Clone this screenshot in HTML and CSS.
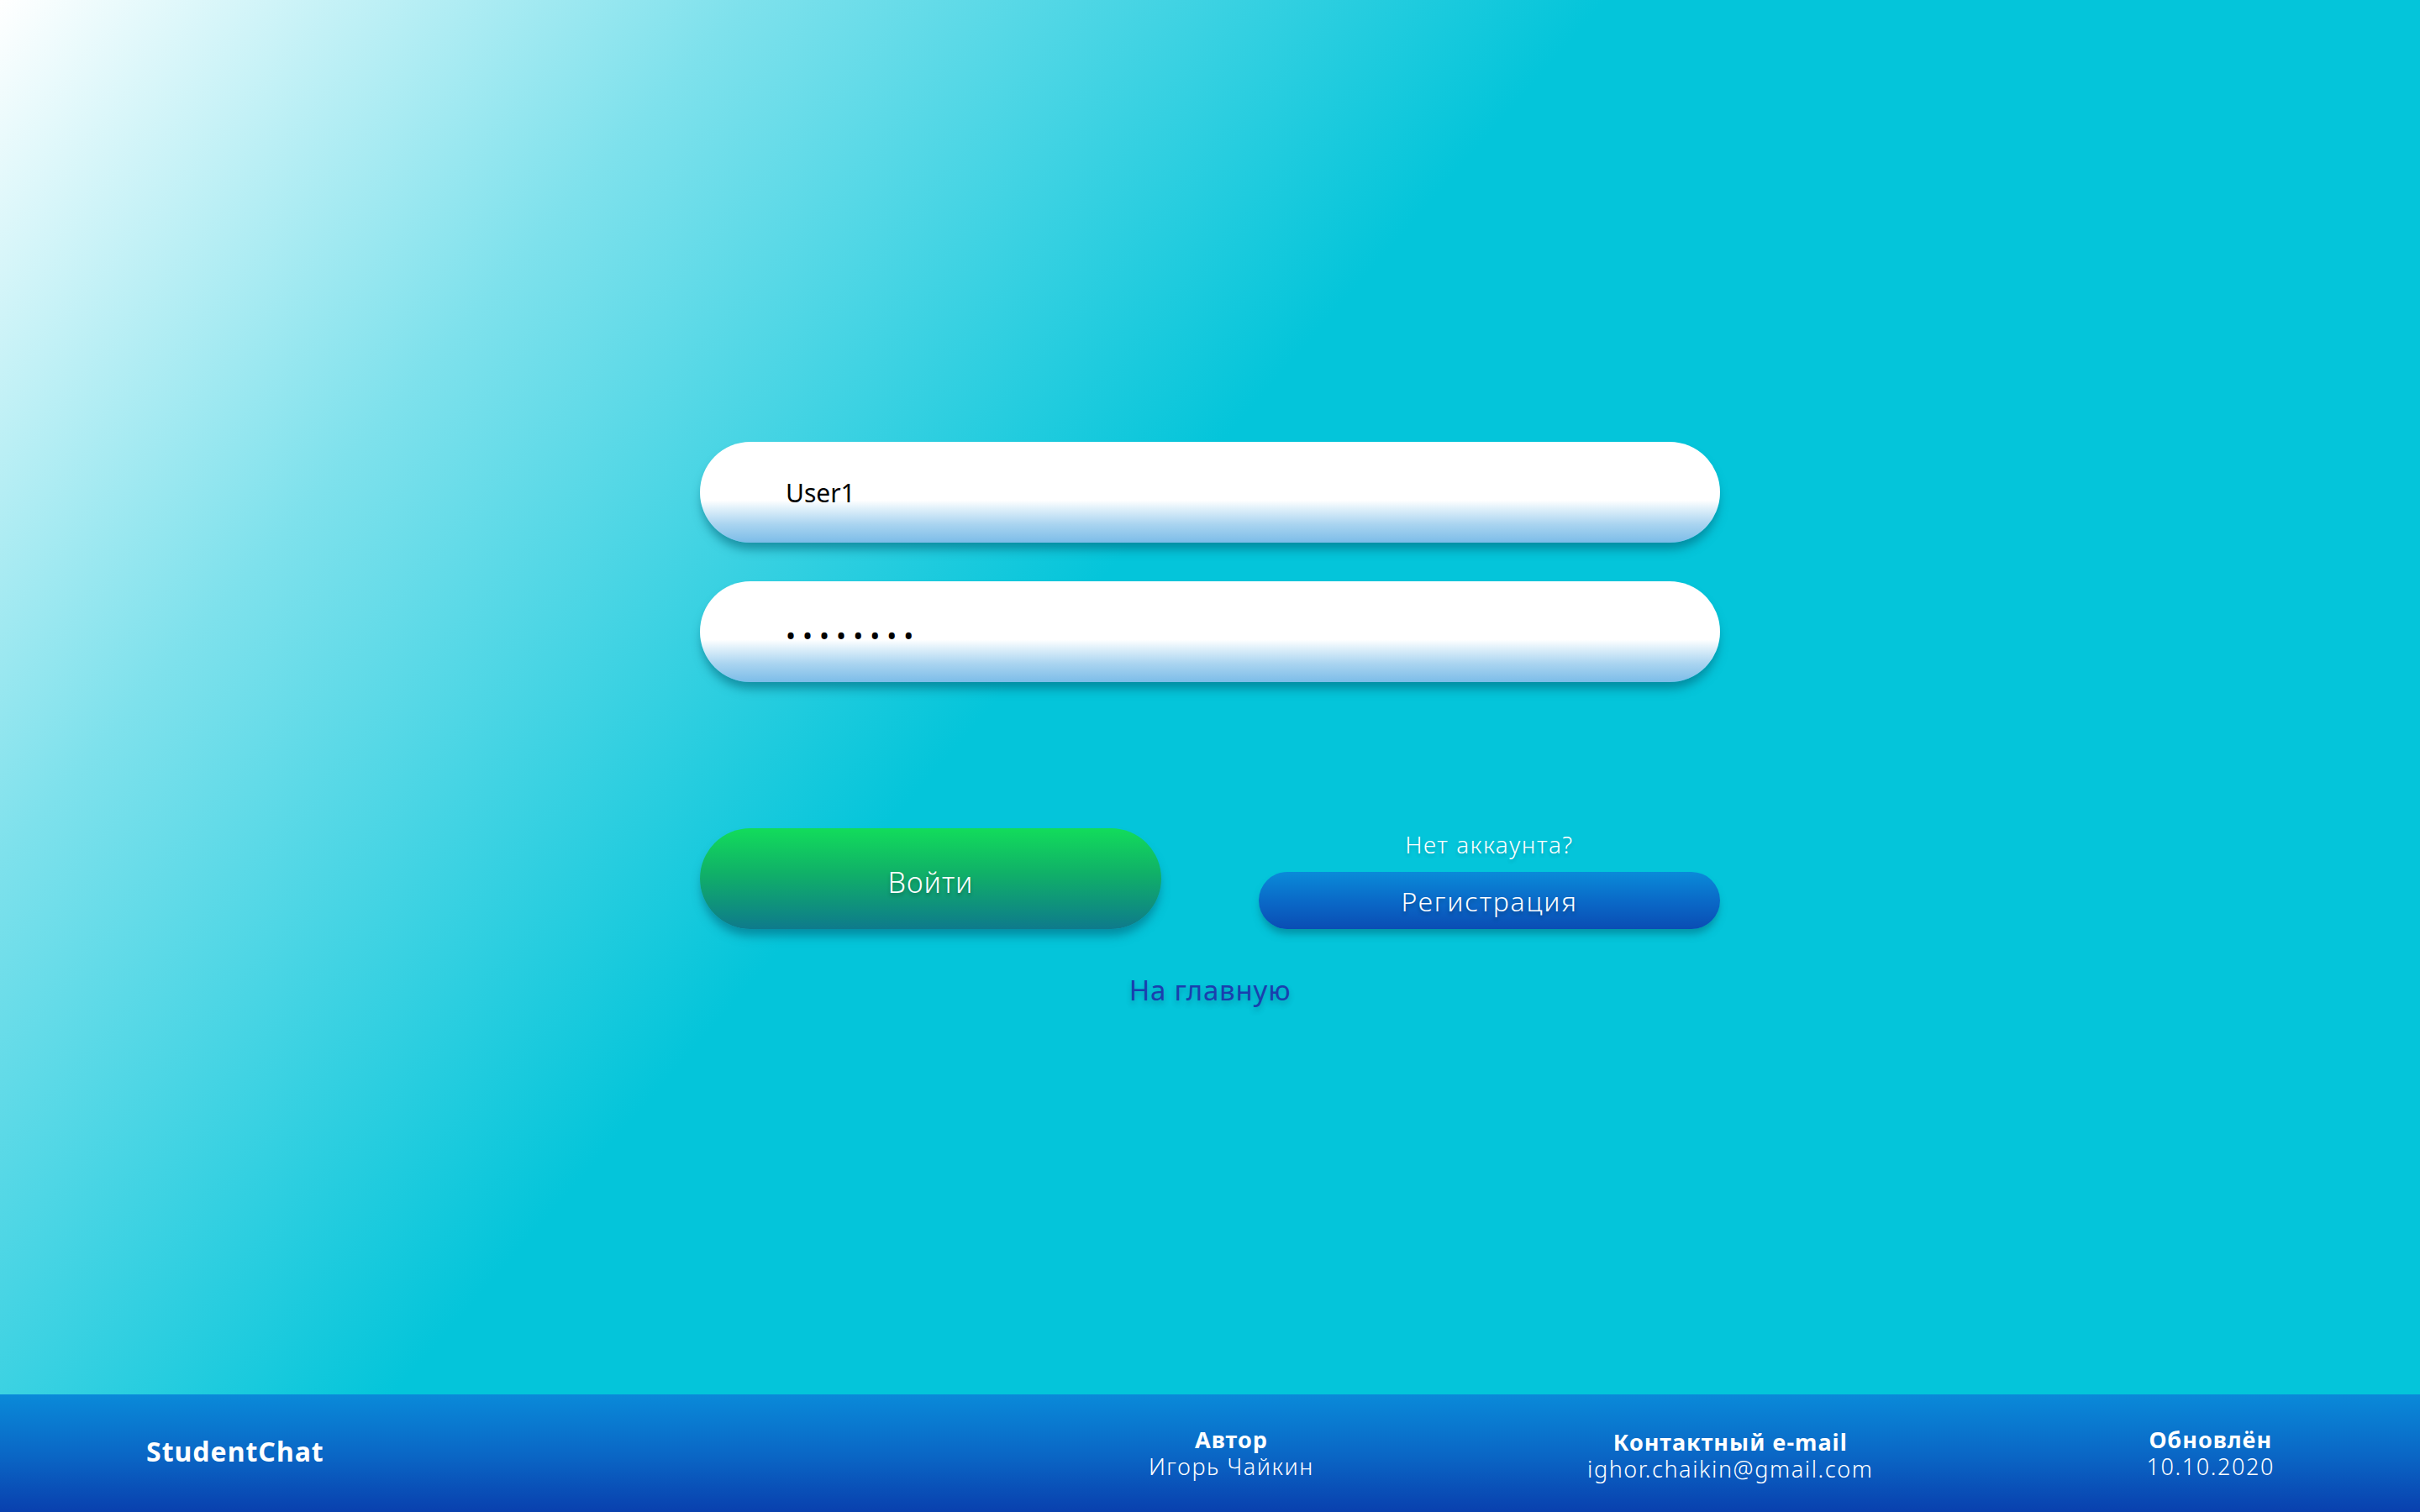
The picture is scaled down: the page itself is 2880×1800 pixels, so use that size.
FILE: index.html
```html
<!DOCTYPE html>
<html lang="ru">
<head>
<meta charset="utf-8">
<title>StudentChat — Вход</title>
<link rel="stylesheet" href="styles.css">
</head>
<body>
<div class="page">
  <main class="main">
    <form class="login">
      <input class="field" type="text" value="User1">
      <input class="field field-pass" type="password" value="password">
      <div class="actions">
        <button class="btn btn-login" type="button">Войти</button>
        <div class="register">
          <span class="register-hint">Нет аккаунта?</span>
          <button class="btn btn-register" type="button">Регистрация</button>
        </div>
      </div>
      <a class="home-link" href="#">На главную</a>
    </form>
  </main>
  <footer class="footer">
    <div class="brand">StudentChat</div>
    <div class="info">
      <div class="info-item">
        <div class="info-title">Автор</div>
        <div class="info-value">Игорь Чайкин</div>
      </div>
      <div class="info-item info-mail">
        <div class="info-title">Контактный e-mail</div>
        <div class="info-value">ighor.chaikin@gmail.com</div>
      </div>
      <div class="info-item">
        <div class="info-title">Обновлён</div>
        <div class="info-value">10.10.2020</div>
      </div>
    </div>
  </footer>
</div>
</body>
</html>
```
FILE: styles.css
```css
* { box-sizing: border-box; }

html, body {
  margin: 0;
  padding: 0;
  height: 100%;
}

body {
  font-family: "Noto Sans", "Open Sans", sans-serif;
  background: linear-gradient(131deg, #ffffff 0%, #7ee1ec 20%, #04c5da 43%, #04c5da 100%);
  color: #fff;
}

.page {
  height: 1800px;
  display: flex;
  flex-direction: column;
}

.main {
  flex: 1;
  display: flex;
  justify-content: center;
  padding-top: 526px;
}

.login {
  width: 1214px;
  display: flex;
  flex-direction: column;
  align-items: stretch;
}

.field {
  height: 120px;
  border: none;
  outline: none;
  border-radius: 60px;
  padding: 0 0 0 102px;
  font-family: "Noto Sans", sans-serif;
  font-size: 30px;
  color: #000;
  background: linear-gradient(to bottom, #ffffff 0%, #ffffff 58%, #e4f2fb 65%, #a9d4f0 82%, #7cbce8 100%);
  box-shadow: 0 10px 12px -2px rgba(0, 95, 115, 0.55);
}

.field-pass {
  margin-top: 46px;
  font-size: 32px;
  letter-spacing: 8px;
  padding-top: 8px;
}

.actions {
  margin-top: 174px;
  display: grid;
  grid-template-columns: 549px 549px;
  justify-content: space-between;
  align-items: end;
}

.btn {
  border: none;
  outline: none;
  color: #fff;
  font-family: "Noto Sans", sans-serif;
  font-weight: 300;
  cursor: pointer;
  text-shadow: 0 3px 4px rgba(0, 0, 0, 0.25);
}

.btn-login {
  height: 120px;
  border-radius: 60px;
  font-size: 34px;
  letter-spacing: 1px;
  padding-top: 8px;
  background: linear-gradient(to bottom, #12dc5b 0%, #10b068 45%, #0e7a8c 100%);
  box-shadow: 0 10px 12px -2px rgba(0, 95, 115, 0.55);
}

.register {
  display: flex;
  flex-direction: column;
  align-items: stretch;
}

.register-hint {
  text-align: center;
  font-size: 28px;
  line-height: 36px;
  font-weight: 300;
  margin-bottom: 15px;
  letter-spacing: 1.5px;
  text-shadow: 0 3px 4px rgba(0, 0, 0, 0.15);
}

.btn-register {
  height: 68px;
  border-radius: 34px;
  font-size: 32px;
  letter-spacing: 1.8px;
  background: linear-gradient(to bottom, #0a8bd9 0%, #0a6ac8 50%, #0a4db4 100%);
  box-shadow: 0 8px 10px -2px rgba(0, 95, 115, 0.5);
}

.home-link {
  align-self: center;
  margin-top: 53px;
  font-size: 33px;
  line-height: 40px;
  color: #1a3fae;
  text-decoration: none;
  text-shadow: 0 4px 6px rgba(0, 60, 90, 0.3);
  letter-spacing: 0.8px;
}

.footer {
  height: 140px;
  padding: 0 173px 0 174px;
  display: flex;
  align-items: center;
  justify-content: space-between;
  background: linear-gradient(to bottom, #0a8ad9 0%, #0a68c6 50%, #0940ae 100%);
}

.brand {
  font-size: 32px;
  font-weight: 700;
  letter-spacing: 1px;
  margin-top: -6px;
}

.info {
  display: flex;
  gap: 325px;
  align-items: center;
}

.info-item {
  text-align: center;
}

.info-mail {
  margin-top: 6px;
}

.info-title {
  font-size: 27px;
  font-weight: 700;
  line-height: 32px;
  letter-spacing: 1px;
}

.info-value {
  font-size: 27px;
  font-weight: 300;
  line-height: 32px;
  letter-spacing: 1.6px;
}
```
